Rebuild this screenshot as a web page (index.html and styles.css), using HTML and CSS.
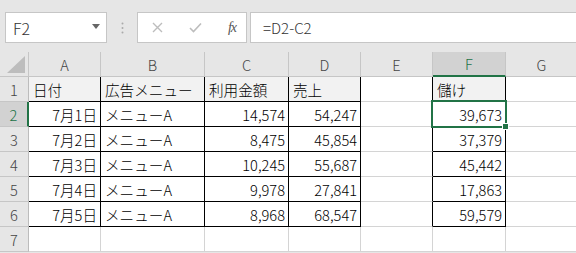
FILE: index.html
```html
<!DOCTYPE html>
<html lang="ja">
<head>
  <meta charset="UTF-8">
  <title>売上と儲け</title>
  <link rel="stylesheet" href="styles.css">
</head>
<body>
  <div class="bar">
    <div class="namebox">
      <span>F2</span>
      <svg class="arrow" width="8" height="5" viewBox="0 0 8 5"><path d="M0 0H8L4 5Z" fill="#666"/></svg>
    </div>
    <div class="dots">
      <svg width="3" height="12" viewBox="0 0 3 12"><circle cx="1.5" cy="1.5" r="1" fill="#aaa"/><circle cx="1.5" cy="6" r="1" fill="#aaa"/><circle cx="1.5" cy="10.5" r="1" fill="#aaa"/></svg>
    </div>
    <div class="buttons">
      <svg width="11" height="11" viewBox="0 0 11 11"><path d="M1 1L10 10M10 1L1 10" stroke="#bdbdbd" stroke-width="1.4"/></svg>
      <svg width="13" height="11" viewBox="0 0 13 11"><path d="M1 6L4.5 9.5L12 1.5" stroke="#bdbdbd" stroke-width="1.6" fill="none"/></svg>
      <span class="fx">fx</span>
    </div>
    <div class="formula">=D2-C2</div>
  </div>

  <div class="sheet">
    <div class="hd corner">
      <svg width="18" height="17" viewBox="0 0 18 17"><path d="M18 0V17H0Z" fill="#bdbdbd"/></svg>
    </div>
    <div class="hd">A</div>
    <div class="hd">B</div>
    <div class="hd">C</div>
    <div class="hd">D</div>
    <div class="hd">E</div>
    <div class="hd col-sel">F</div>
    <div class="hd">G</div>

    <div class="rh">1</div>
    <div class="c tb head">日付</div>
    <div class="c tb head">広告メニュー</div>
    <div class="c tb head">利用金額</div>
    <div class="c tb head">売上</div>
    <div class="c edge"></div>
    <div class="c tb head">儲け</div>
    <div class="c"></div>

    <div class="rh row-sel">2</div>
    <div class="c tb num">7月1日</div>
    <div class="c tb">メニューA</div>
    <div class="c tb num">14,574</div>
    <div class="c tb num">54,247</div>
    <div class="c edge"></div>
    <div class="c tb num active">39,673</div>
    <div class="c"></div>

    <div class="rh">3</div>
    <div class="c tb num">7月2日</div>
    <div class="c tb">メニューA</div>
    <div class="c tb num">8,475</div>
    <div class="c tb num">45,854</div>
    <div class="c edge"></div>
    <div class="c tb num">37,379</div>
    <div class="c"></div>

    <div class="rh">4</div>
    <div class="c tb num">7月3日</div>
    <div class="c tb">メニューA</div>
    <div class="c tb num">10,245</div>
    <div class="c tb num">55,687</div>
    <div class="c edge"></div>
    <div class="c tb num">45,442</div>
    <div class="c"></div>

    <div class="rh">5</div>
    <div class="c tb num">7月4日</div>
    <div class="c tb">メニューA</div>
    <div class="c tb num">9,978</div>
    <div class="c tb num">27,841</div>
    <div class="c edge"></div>
    <div class="c tb num">17,863</div>
    <div class="c"></div>

    <div class="rh">6</div>
    <div class="c tb num">7月5日</div>
    <div class="c tb">メニューA</div>
    <div class="c tb num">8,968</div>
    <div class="c tb num">68,547</div>
    <div class="c edge"></div>
    <div class="c tb num">59,579</div>
    <div class="c"></div>

    <div class="rh">7</div>
    <div class="c"></div>
    <div class="c"></div>
    <div class="c"></div>
    <div class="c"></div>
    <div class="c"></div>
    <div class="c"></div>
    <div class="c"></div>
  </div>
</body>
</html>
```

FILE: styles.css
```css
body {
  margin: 0;
  background-color: #e6e6e6;
  font-family: "Noto Sans CJK JP", "Noto Sans", sans-serif;
  font-weight: 300;
  overflow: hidden;
}
.bar {
  display: flex;
  align-items: stretch;
  height: 31px;
  padding: 12px 0 0 5px;
  margin-bottom: 9px;
  border-top: 3px solid #ececec;
  margin-top: -3px;
}
.namebox, .buttons, .formula {
  background-color: white;
  border: 1px solid #c6c6c6;
  box-sizing: border-box;
}
.namebox {
  width: 102px;
  display: flex;
  align-items: center;
  justify-content: space-between;
  padding: 0 6px 0 7px;
  font-size: 16px;
  color: #333;
}
.namebox .arrow {
  margin-top: -2px;
}
.dots {
  width: 30px;
  display: flex;
  align-items: center;
  justify-content: center;
}
.buttons {
  width: 110px;
  display: flex;
  align-items: center;
  justify-content: space-between;
  padding: 0 10px 0 14px;
}
.fx {
  font-family: "Liberation Serif", serif;
  font-style: italic;
  font-weight: 400;
  font-size: 14px;
  color: #555;
  letter-spacing: -1px;
}
.formula {
  flex: 1;
  margin-left: 3px;
  margin-right: -2px;
  padding-left: 12px;
  display: flex;
  align-items: center;
  font-size: 15px;
  color: #333;
}
.sheet {
  display: grid;
  grid-template-columns: 29px 72px 104px 84px 72px 72px 73px 72px;
  grid-template-rows: 25px repeat(7, 25px);
  font-size: 14.6px;
}
.sheet > div {
  box-sizing: border-box;
  border-right: 1px solid #d4d4d4;
  border-bottom: 1px solid #d4d4d4;
  display: flex;
  align-items: center;
  white-space: nowrap;
  overflow: visible;
}
.hd {
  background-color: #e6e6e6;
  justify-content: center;
  color: #444;
  border-color: #c6c6c6 !important;
}
.corner {
  justify-content: flex-end !important;
  align-items: flex-end !important;
  padding: 0 3px 3px 0;
}
.col-sel {
  background-color: #d2d2d2;
  color: #217346;
  border-bottom: 2px solid #217346 !important;
}
.rh {
  background-color: #e6e6e6;
  justify-content: center;
  color: #444;
  border-color: #c6c6c6 !important;
  border-right-color: #bcbcbc !important;
}
.row-sel {
  background-color: #d2d2d2;
  color: #217346;
  border-right: 2px solid #217346 !important;
}
.c {
  background-color: white;
  color: #000;
  padding: 0 3px 0 4px;
}
.sheet > .tb {
  border-right-color: #000;
  border-bottom-color: #000;
}
.sheet > .edge {
  border-right-color: #000;
}
.head {
  background-color: #f2f2f2 !important;
}
.num {
  justify-content: flex-end;
}
.active {
  position: relative;
}
.active::after {
  content: "";
  position: absolute;
  left: -2px;
  top: -2px;
  right: -2px;
  bottom: -2px;
  border: 2px solid #217346;
}
.active::before {
  content: "";
  position: absolute;
  right: -4px;
  bottom: -4px;
  width: 5px;
  height: 5px;
  background-color: #217346;
  border: 1px solid white;
  z-index: 1;
}
```
